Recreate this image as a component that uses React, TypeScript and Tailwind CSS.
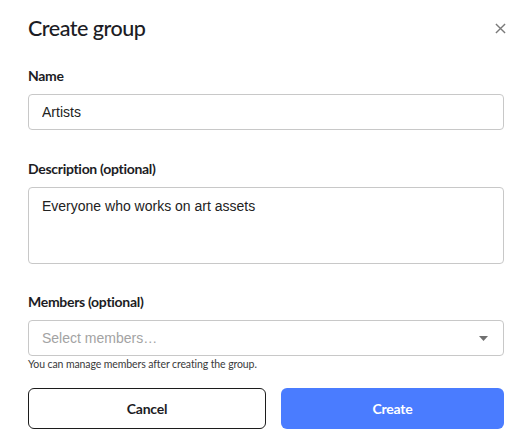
export default function App() {
  return (
    <div className="w-[532px] h-[444px] bg-white font-['Lato',sans-serif] text-[#1c1c24]">
      <div className="px-7 pt-[12px]">
        {/* Header */}
        <div className="flex items-center justify-between">
          <h1 className="text-[21.5px] leading-[32px] font-medium tracking-[-0.5px]">Create group</h1>
          <button className="w-6 h-6 flex items-center justify-center text-[#7a7a7a] -mr-[8px]">
            <svg className="w-[11px] h-[11px]" viewBox="0 0 12 12" fill="none" stroke="currentColor" strokeWidth="1.5">
              <path d="M1 1l10 10M11 1L1 11" />
            </svg>
          </button>
        </div>

        {/* Name */}
        <div className="mt-[22px]">
          <label className="block text-[14px] leading-[20px] font-bold tracking-[-0.3px] mb-[8px]">Name</label>
          <input
            defaultValue="Artists"
            className="w-full h-[36px] px-[13px] border border-[#c8c8c8] rounded-[4px] font-['Liberation_Sans',Arial,sans-serif] text-[14px] text-[#222] outline-none"
          />
        </div>

        {/* Description */}
        <div className="mt-[29px]">
          <label className="block text-[14px] leading-[20px] font-bold tracking-[-0.3px] mb-[8px]">Description (optional)</label>
          <textarea
            defaultValue="Everyone who works on art assets"
            className="block w-full h-[77px] px-[13px] py-[8px] border border-[#c8c8c8] rounded-[4px] font-['Liberation_Sans',Arial,sans-serif] text-[14px] leading-[20px] text-[#222] outline-none resize-none"
          />
        </div>

        {/* Members */}
        <div className="mt-[28px]">
          <label className="block text-[14px] leading-[20px] font-bold tracking-[-0.3px] mb-[8px]">Members (optional)</label>
          <div className="flex items-center justify-between h-[36px] pl-[13px] pr-[15px] border border-[#c8c8c8] rounded-[4px]">
            <span className="font-['Liberation_Sans',Arial,sans-serif] text-[14px] text-[#a3a3a3]">Select members…</span>
            <svg className="w-[9px] h-[5px] text-[#707070]" viewBox="0 0 9 5" fill="currentColor">
              <path d="M0 0h9L4.5 5z" />
            </svg>
          </div>
          <p className="mt-[1px] text-[10.5px] leading-[14px] tracking-[-0.1px] text-[#3a3a3a]">You can manage members after creating the group.</p>
        </div>

        {/* Buttons */}
        <div className="flex gap-[15px] mt-[17px]">
          <button className="w-[238px] h-[41px] border border-[#1c1c1c] rounded-[6px] text-[14px] font-bold tracking-[-0.2px] text-[#1c1c24]">
            Cancel
          </button>
          <button className="flex-1 h-[41px] rounded-[6px] bg-[#4a7cff] text-[14px] font-bold tracking-[-0.2px] text-white">
            Create
          </button>
        </div>
      </div>
    </div>
  );
}
